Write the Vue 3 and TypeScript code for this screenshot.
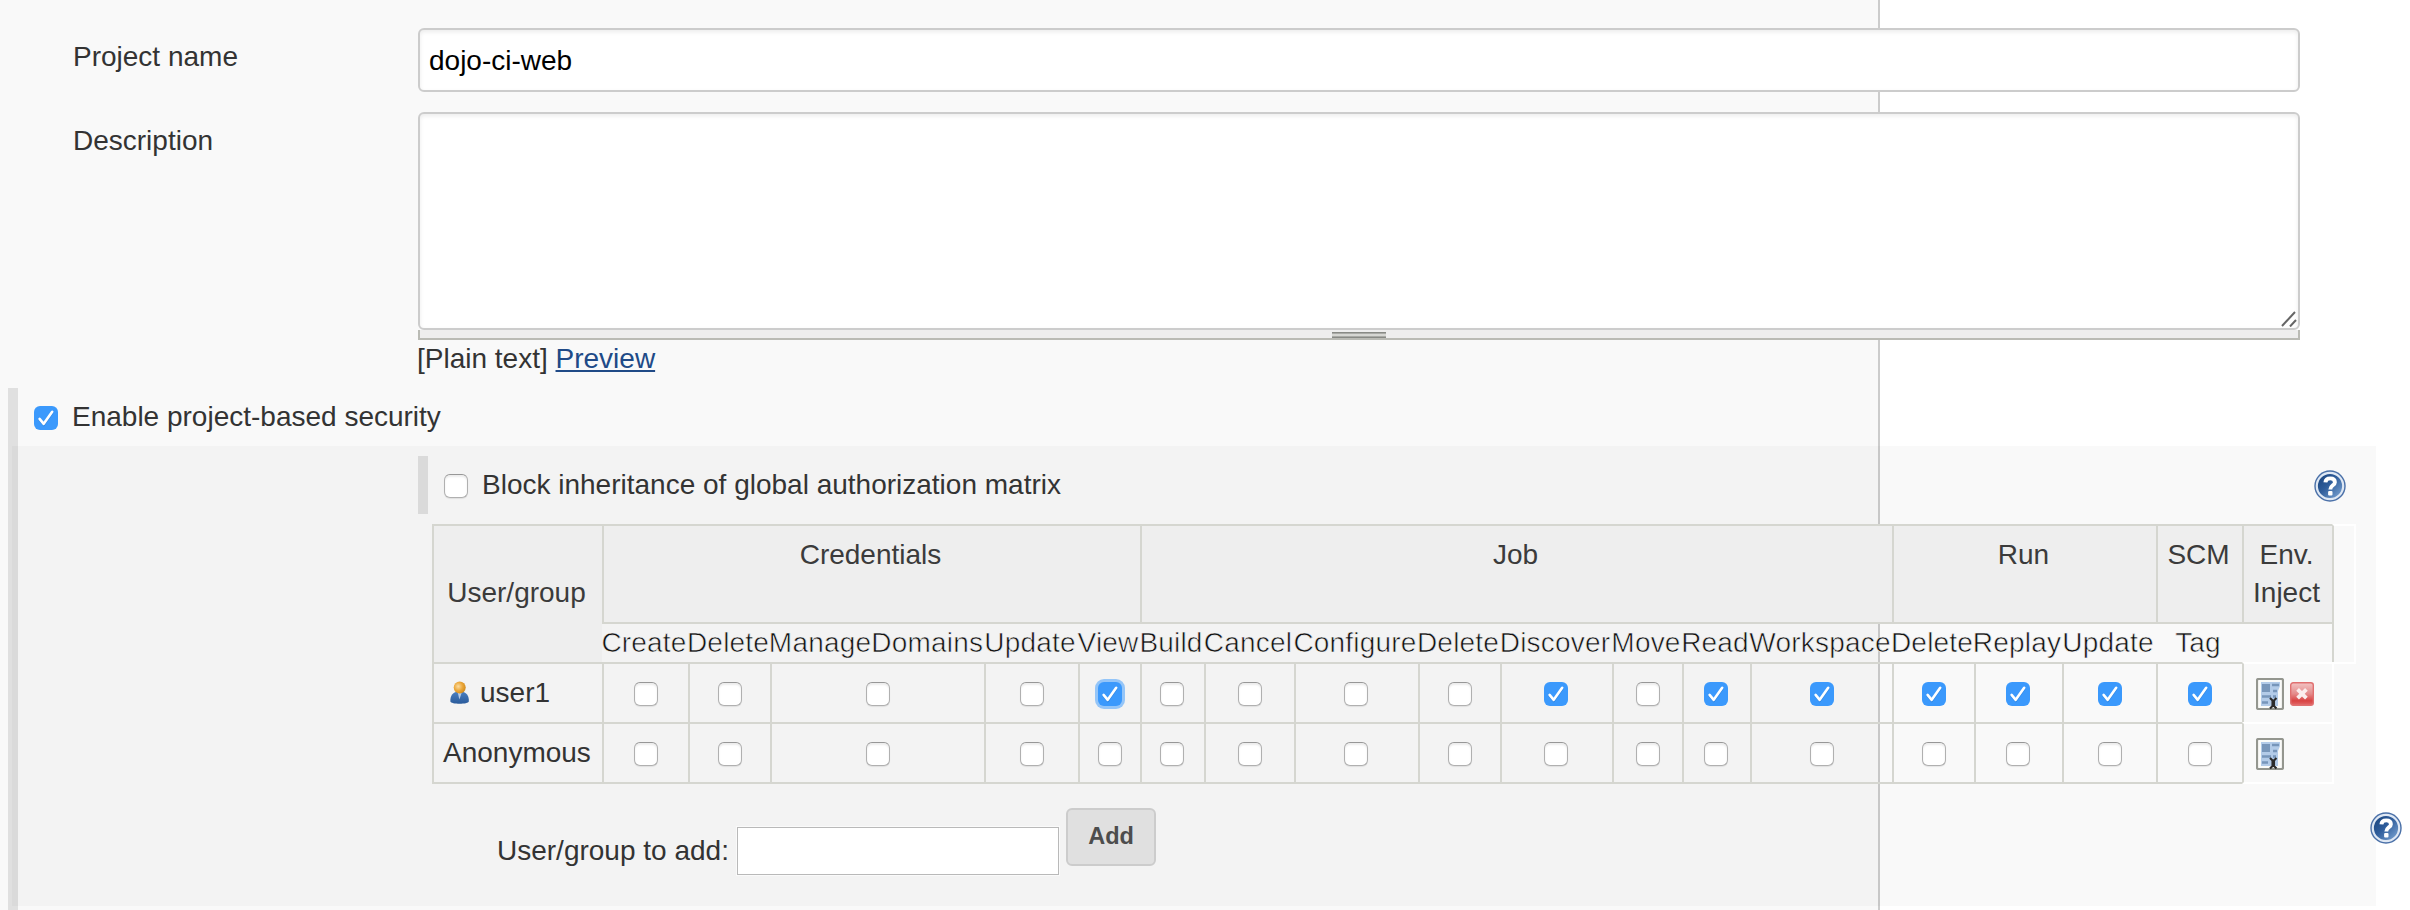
<script setup lang="ts">
import { ref } from 'vue'

interface Group {
  name: string
  permissions: string[]
}

interface Sid {
  name: string
  known: boolean
  removable: boolean
  granted: string[]
}

const projectName = ref('dojo-ci-web')

const groups: Group[] = [
  { name: 'Credentials', permissions: ['Create', 'Delete', 'ManageDomains', 'Update', 'View'] },
  {
    name: 'Job',
    permissions: ['Build', 'Cancel', 'Configure', 'Delete', 'Discover', 'Move', 'Read', 'Workspace'],
  },
  { name: 'Run', permissions: ['Delete', 'Replay', 'Update'] },
  { name: 'SCM', permissions: ['Tag'] },
]

const widths = [86, 82, 214, 94, 62, 64, 90, 124, 82, 112, 70, 68, 142, 82, 88, 94, 86]

// Boxes sit on even pixels, so cells with an odd centre nudge theirs to the left.
const columns = groups
  .flatMap((g) => g.permissions.map((p) => ({ key: `${g.name}.${p}`, label: p })))
  .map((c, i) => ({ ...c, nudge: widths[i] % 4 === 0 }))

const gridColumns = `170px ${widths.map((w) => `${w}px`).join(' ')} 90px 24px`

const focused = 'Credentials.View'

const sids: Sid[] = [
  {
    name: 'user1',
    known: true,
    removable: true,
    granted: [
      'Credentials.View',
      'Job.Discover',
      'Job.Read',
      'Job.Workspace',
      'Run.Delete',
      'Run.Replay',
      'Run.Update',
      'SCM.Tag',
    ],
  },
  { name: 'Anonymous', known: false, removable: false, granted: [] },
]
</script>

<template>
  <main class="page">
    <svg class="defs" width="0" height="0" aria-hidden="true">
      <defs>
        <linearGradient id="helpFill" x1="0" y1="0" x2="1" y2="1">
          <stop offset="0" stop-color="#164079" />
          <stop offset="0.45" stop-color="#2f5d9b" />
          <stop offset="1" stop-color="#86aedb" />
        </linearGradient>
        <linearGradient id="removeFill" x1="0" y1="0" x2="0" y2="1">
          <stop offset="0" stop-color="#f3c4c4" />
          <stop offset="0.5" stop-color="#e48a8a" />
          <stop offset="0.8" stop-color="#d94343" />
          <stop offset="1" stop-color="#e26a6a" />
        </linearGradient>
        <radialGradient id="headFill" cx="0.38" cy="0.4" r="0.65">
          <stop offset="0" stop-color="#fbdca0" />
          <stop offset="0.55" stop-color="#eba73a" />
          <stop offset="1" stop-color="#d08a1c" />
        </radialGradient>
        <linearGradient id="bodyFill" x1="0" y1="0" x2="0" y2="1">
          <stop offset="0" stop-color="#4a80c2" />
          <stop offset="1" stop-color="#2a5a9a" />
        </linearGradient>
        <symbol id="help" viewBox="0 0 32 32">
          <circle cx="16" cy="16" r="15.7" fill="#4a70a8" />
          <circle cx="16" cy="16" r="13.2" fill="url(#helpFill)" stroke="#dfe8f4" stroke-width="2.2" />
          <path d="M11.4 12.4C11.6 9.4 13.4 8.4 16.2 8.4C19.1 8.4 20.9 9.8 20.9 12.2C20.9 15.4 16.3 15.2 16.3 19.4" fill="none" stroke="#fff" stroke-width="3.9" />
          <rect x="14.1" y="21" width="4.4" height="4.4" rx="1" fill="#fff" />
        </symbol>
        <symbol id="tick" viewBox="0 0 24 24">
          <path d="M5.6 13.7L9.8 18.7L18.2 6.8" fill="none" stroke="#1f6fc4" stroke-opacity="0.45" stroke-width="2.6" stroke-linecap="round" />
          <path d="M5.6 12.9L9.7 17.8L18.2 5.8" fill="none" stroke="#fff" stroke-width="2.6" stroke-linecap="round" stroke-linejoin="round" />
        </symbol>
        <symbol id="toggle" viewBox="0 0 28 32">
          <rect x="1" y="1" width="26" height="30" rx="1.5" fill="#fbfbf9" stroke="#94968f" stroke-width="2.2" />
          <path d="M5 4H24V8L22 13V28H5Z" fill="#b3cbe8" />
          <rect x="6" y="6" width="8" height="8" fill="#7896ba" />
          <path d="M16 7H23M17 13H21M6 18.5H15M6 24.5H12M17 18.5H20" stroke="#7896ba" stroke-width="2.4" fill="none" />
          <path d="M14 20L16.5 22.5V28L14 30.5M20.5 20L18 22.5V28L20.5 30.5" stroke="#2b2b2b" stroke-width="2.1" fill="none" />
        </symbol>
        <symbol id="remove" viewBox="0 0 24 24">
          <rect x="0.7" y="0.7" width="22.6" height="22.6" rx="2.5" fill="url(#removeFill)" stroke="#e07070" stroke-width="1.4" />
          <path d="M7.6 7.3L16.4 16.2M16.4 7.3L7.6 16.2" stroke="#fbeeee" stroke-width="3.8" />
        </symbol>
        <symbol id="person" viewBox="0 0 24 24">
          <path d="M2.4 20.6C2 15 4.4 10.5 11.6 10.5C18.8 10.5 21.2 15 20.8 20.6C20.4 23.6 2.8 23.6 2.4 20.6Z" fill="url(#bodyFill)" />
          <path d="M9.8 12L11.4 18.5L13.6 12Z" fill="#b4cae6" />
          <circle cx="11.7" cy="6.6" r="6" fill="url(#headFill)" />
        </symbol>
      </defs>
    </svg>

    <section class="row name-row">
      <label class="row-label" for="name">Project name</label>
      <input id="name" v-model="projectName" class="text-input" type="text" />
    </section>

    <section class="row description-row">
      <label class="row-label">Description</label>
      <div class="description">
        <div class="textarea">
          <svg class="resizer" width="16" height="16" viewBox="0 0 16 16">
            <path d="M1 15L14 1M9 15.5L15 9" stroke="#666" stroke-width="2" fill="none" />
          </svg>
        </div>
        <div class="handle"><span class="grip"></span></div>
        <div class="markup">[Plain text] <a class="preview">Preview</a></div>
      </div>
    </section>

    <section class="security">
      <div class="enable-row">
        <span class="check on"><svg class="mark"><use href="#tick" /></svg></span>
        <span>Enable project-based security</span>
      </div>

      <div class="panel">
        <div class="block-row">
          <span class="check"></span>
          <span class="block-label">Block inheritance of global authorization matrix</span>
          <svg class="help"><use href="#help" /></svg>
        </div>

        <div class="matrix" :style="{ gridTemplateColumns: gridColumns }">
          <div class="cell head user-head">User/group</div>
          <div v-for="g in groups" :key="g.name" class="cell head" :style="{ gridColumn: `span ${g.permissions.length}` }">
            {{ g.name }}
          </div>
          <div class="cell head">Env.<br />Inject</div>
          <div class="cell spare"></div>
          <div v-for="c in columns" :key="c.key" class="cell perm">{{ c.label }}</div>
          <div class="cell perm"></div>

          <template v-for="(s, i) in sids" :key="s.name">
            <div class="cell sid" :class="{ last: i === sids.length - 1 }">
              <svg v-if="s.known" class="person"><use href="#person" /></svg>{{ s.name }}
            </div>
            <div v-for="c in columns" :key="c.key" class="cell box" :class="{ last: i === sids.length - 1, nudge: c.nudge }">
              <span class="check" :class="{ on: s.granted.includes(c.key), focus: s.known && c.key === focused }">
                <svg v-if="s.granted.includes(c.key)" class="mark"><use href="#tick" /></svg>
              </span>
            </div>
            <div class="cell tools" :class="{ last: i === sids.length - 1 }">
              <svg class="toggle"><use href="#toggle" /></svg>
              <svg v-if="s.removable" class="remove"><use href="#remove" /></svg>
            </div>
          </template>
        </div>

        <div class="add-row">
          <span class="add-label">User/group to add:</span>
          <input class="add-input" type="text" />
          <button class="add-button" type="button">Add</button>
          <svg class="help outer"><use href="#help" /></svg>
        </div>
      </div>
    </section>
  </main>
</template>

<style>
html,
body {
  margin: 0;
  overflow: hidden;
}
</style>

<style scoped>
.page {
  box-sizing: border-box;
  width: 2410px;
  height: 910px;
  overflow: hidden;
  padding-top: 28px;
  background: linear-gradient(to right, #f9f9f9 1878px, #ccc 1878px, #ccc 1880px, #fff 1880px);
  color: #333;
  font-family: 'Liberation Sans', Helvetica, Arial, sans-serif;
  font-size: 28px;
  line-height: 38px;
}
.page * {
  box-sizing: border-box;
}
.defs {
  position: absolute;
}
.row {
  display: flex;
}
.row-label {
  flex: none;
  width: 418px;
  padding: 10px 0 0 73px;
}
.name-row {
  height: 64px;
}
.text-input {
  width: 1882px;
  height: 64px;
  padding: 2px 9px 0;
  border: 2px solid #ccc;
  border-radius: 6px;
  background: #fff;
  box-shadow: inset 0 2px 4px rgba(0, 0, 0, 0.08);
  color: #000;
  font: inherit;
}
.description-row {
  margin-top: 20px;
  height: 276px;
}
.description {
  width: 1882px;
}
.textarea {
  display: flex;
  align-items: flex-end;
  justify-content: flex-end;
  height: 218px;
  padding: 0 1px 1px 0;
  border: 2px solid #ccc;
  border-radius: 6px;
  background: #fff;
  box-shadow: inset 0 2px 4px rgba(0, 0, 0, 0.08);
}
.resizer {
  display: block;
}
.handle {
  display: flex;
  justify-content: center;
  height: 10px;
  padding-top: 2px;
  border: solid #babbb5;
  border-width: 0 2px 2px;
  background: #eee;
}
.grip {
  width: 54px;
  height: 6px;
  background: linear-gradient(#888a85 1px, #a9aaa6 1px, #a9aaa6 2px, #d6d7d3 2px, #d6d7d3 4px, #a9aaa6 4px, #a9aaa6 5px, #888a85 5px);
}
.markup {
  margin-left: -1px;
}
.preview {
  color: #204a87;
  text-decoration: underline;
  text-decoration-thickness: 2px;
  text-underline-offset: 2px;
}
.security {
  margin-left: 8px;
  height: 522px;
  background: linear-gradient(to right, rgba(0, 0, 0, 0.1) 10px, transparent 10px);
}
.enable-row {
  display: flex;
  align-items: center;
  gap: 14px;
  height: 58px;
  padding-left: 26px;
}
.check {
  display: block;
  flex: none;
  width: 24px;
  height: 24px;
  margin-top: 2px;
  border: 1px solid #b0b0b0;
  border-top-color: #979797;
  border-radius: 6px;
  background: #fff;
  box-shadow: inset 0 2px 2px rgba(0, 0, 0, 0.08), 0 1px 1px rgba(0, 0, 0, 0.08);
}
.check.on {
  border: 0;
  background: #3b99fc;
  box-shadow: none;
}
.check.focus {
  box-shadow: 0 0 0 3px #94c5f8;
}
.mark {
  display: block;
  width: 24px;
  height: 24px;
}
.panel {
  width: 2364px;
  height: 460px;
  margin-left: 4px;
  padding: 10px 0 0 406px;
  background: rgba(0, 0, 0, 0.025);
}
.block-row {
  display: flex;
  align-items: center;
  height: 58px;
  padding: 0 30px 0 16px;
  border-left: 10px solid rgba(0, 0, 0, 0.1);
}
.block-label {
  flex: 1;
  padding-left: 14px;
}
.help {
  flex: none;
  width: 32px;
  height: 32px;
  margin-top: 2px;
}
.matrix {
  display: grid;
  width: 1924px;
  margin: 10px 0 0 14px;
  grid-template-rows: 98px 40px 60px 62px;
}
.cell {
  border: solid #d5d6d0;
  border-width: 2px 0 0 2px;
}
.head {
  padding: 10px 3px 0 0;
  background: #eee;
  color: #3b3b3b;
  text-align: center;
}
.user-head {
  grid-row: span 2;
  padding-top: 48px;
}
.spare {
  grid-row: span 2;
  margin-bottom: -2px;
  border-color: #fff #fff #fff #d5d6d0;
  border-width: 2px;
}
.perm {
  display: flex;
  justify-content: center;
  min-width: 0;
  padding-right: 2px;
  border-left-width: 0;
  color: #111;
  letter-spacing: 0.2px;
  white-space: nowrap;
  -webkit-text-stroke: 0.6px #f4f4f4;
}
.sid {
  display: flex;
  align-items: center;
  padding-left: 9px;
}
.person {
  width: 24px;
  height: 24px;
  margin: 0 8px 0 5px;
}
.box {
  display: flex;
  align-items: center;
  justify-content: center;
}
.box.nudge {
  padding-right: 2px;
}
.tools {
  display: flex;
  grid-column: span 2;
  align-items: center;
  gap: 6px;
  width: 92px;
  padding: 2px 0 0 12px;
  border-color: #fff #fff #fff #d5d6d0;
  border-right-width: 2px;
}
.last {
  border-bottom-width: 2px;
}
.toggle {
  width: 28px;
  height: 32px;
}
.remove {
  width: 24px;
  height: 24px;
}
.add-row {
  display: flex;
  align-items: flex-start;
  padding: 24px 0 0 79px;
}
.add-row > * {
  flex: none;
}
.add-label {
  width: 240px;
  padding-top: 24px;
  white-space: nowrap;
}
.add-input {
  width: 322px;
  height: 48px;
  margin-top: 19px;
  border: 1px solid #b9b9b9;
  outline: 1px solid #fafafa;
  background: #fff;
}
.add-button {
  width: 90px;
  height: 58px;
  margin-left: 7px;
  padding: 0 0 1px;
  border: 2px solid #ccc;
  border-radius: 6px;
  background: #e0e0e0;
  color: #4d4d4d;
  font: bold 23.5px 'Liberation Sans', Helvetica, Arial, sans-serif;
}
.outer {
  margin: 4px 0 0 1214px;
}
</style>
